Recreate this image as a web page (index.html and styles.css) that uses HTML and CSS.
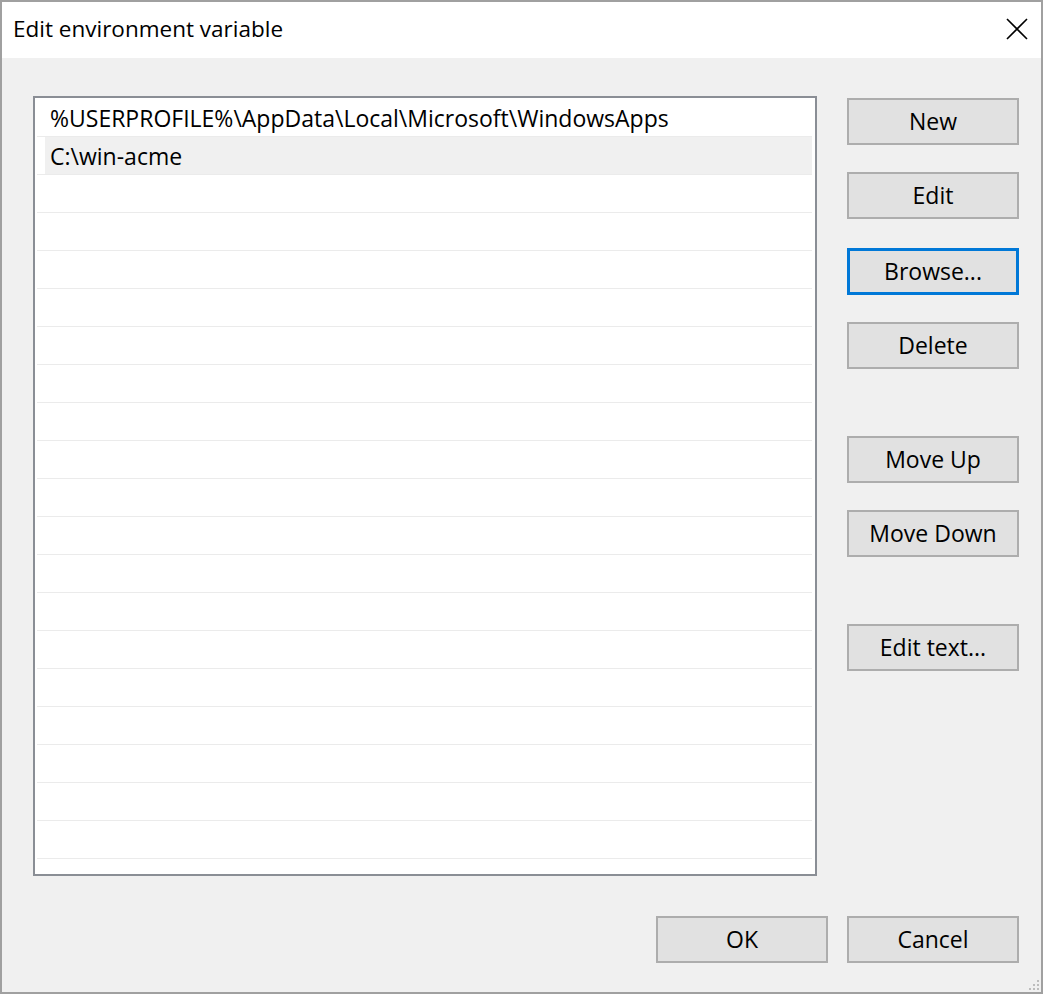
FILE: index.html
```html
<!DOCTYPE html>
<html lang="en">
<head>
    <meta charset="UTF-8">
    <title>Edit environment variable</title>
    <link rel="stylesheet" href="styles.css">
</head>
<body>

    <div class="window">
        <div class="titlebar">
            <span class="title">Edit environment variable</span>
            <span class="close">
                <svg width="22" height="22" viewBox="0 0 22 22"><path d="M1 1 L21 21 M21 1 L1 21" stroke="#000" stroke-width="1.6" fill="none"/></svg>
            </span>
        </div>

        <div class="content">
            <div class="main">
                <div class="list">
                    <div class="row">%USERPROFILE%\AppData\Local\Microsoft\WindowsApps</div>
                    <div class="row selected">C:\win-acme</div>
                    <div class="row"></div>
                    <div class="row"></div>
                    <div class="row"></div>
                    <div class="row"></div>
                    <div class="row"></div>
                    <div class="row"></div>
                    <div class="row"></div>
                    <div class="row"></div>
                    <div class="row"></div>
                    <div class="row"></div>
                    <div class="row"></div>
                    <div class="row"></div>
                    <div class="row"></div>
                    <div class="row"></div>
                    <div class="row"></div>
                    <div class="row"></div>
                    <div class="row"></div>
                    <div class="row"></div>
                </div>

                <div class="side">
                    <button class="btn">New</button>
                    <button class="btn">Edit</button>
                    <button class="btn focused">Browse...</button>
                    <button class="btn">Delete</button>
                    <button class="btn group">Move Up</button>
                    <button class="btn">Move Down</button>
                    <button class="btn group">Edit text...</button>
                </div>
            </div>

            <div class="footer">
                <button class="btn">OK</button>
                <button class="btn">Cancel</button>
            </div>

            <!-- size grip -->
            <svg class="grip" width="12" height="12" viewBox="0 0 12 12">
                <rect x="9" y="1" width="2" height="2" fill="#bdbdbd"/>
                <rect x="5" y="5" width="2" height="2" fill="#bdbdbd"/>
                <rect x="9" y="5" width="2" height="2" fill="#bdbdbd"/>
                <rect x="1" y="9" width="2" height="2" fill="#bdbdbd"/>
                <rect x="5" y="9" width="2" height="2" fill="#bdbdbd"/>
                <rect x="9" y="9" width="2" height="2" fill="#bdbdbd"/>
            </svg>
        </div>
    </div>

</body>
</html>
```

FILE: styles.css
```css
* {
    box-sizing: border-box;
}
body {
    margin: 0;
    font-family: "Open Sans", "Noto Sans", sans-serif;
    font-size: 23px;
    color: #000;
    background: #f0f0f0;
}
.window {
    width: 1043px;
    height: 994px;
    border: 2px solid #a0a0a0;
    display: flex;
    flex-direction: column;
    background: #f0f0f0;
}
/* title bar */
.titlebar {
    height: 56px;
    background: #fff;
    display: flex;
    align-items: center;
    justify-content: space-between;
    padding: 0 13px 4px 11px;
}
.title {
    font-size: 22.5px;
}
.close {
    display: flex;
    margin-top: 1px;
}
/* dialog body */
.content {
    flex: 1;
    position: relative;
    padding: 38px 22px 0 31px;
}
.main {
    display: flex;
    gap: 30px;
}
.list {
    width: 784px;
    height: 780px;
    border: 2px solid #8a8e95;
    background: #fff;
    padding: 1px 3px 0 2px;
    overflow: hidden;
}
.row {
    height: 38px;
    line-height: 38px;
    padding-left: 13px;
    border-bottom: 1px solid #ebebeb;
    white-space: nowrap;
}
.selected {
    background: linear-gradient(to right, #fff 8px, #f0f0f0 8px);
}
.side {
    width: 172px;
    padding-top: 2px;
    display: flex;
    flex-direction: column;
    gap: 27px;
}
.btn {
    width: 172px;
    height: 47px;
    border: 2px solid #adadad;
    background: #e1e1e1;
    font-family: inherit;
    font-size: 23px;
    color: #000;
    padding: 0 0 2px;
}
.focused {
    border: 3px solid #0078d7;
    margin-top: 2px;
}
.group {
    margin-top: 40px;
}
.footer {
    display: flex;
    justify-content: flex-end;
    gap: 19px;
    margin-top: 40px;
}
.grip {
    position: absolute;
    right: 1px;
    bottom: 1px;
}
```
